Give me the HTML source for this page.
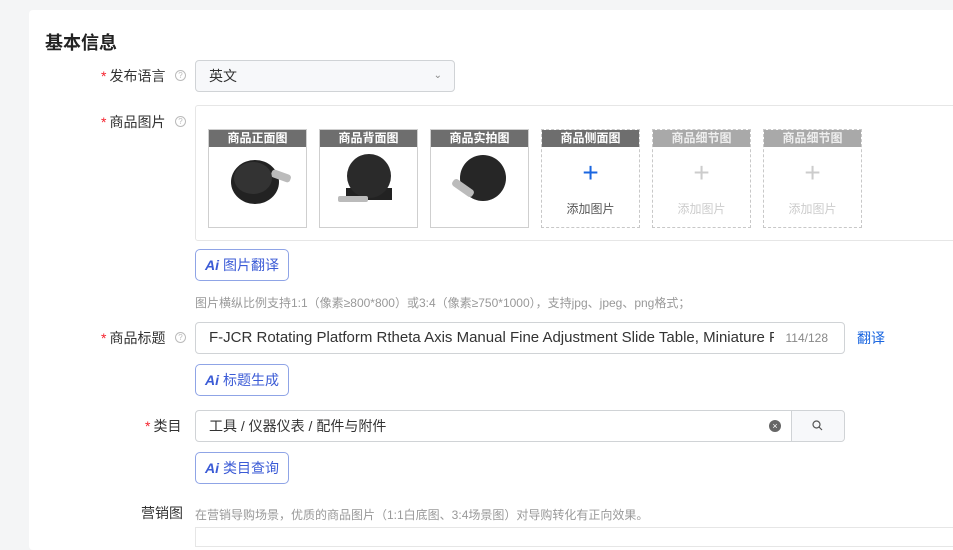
<!DOCTYPE html>
<html><head><meta charset="utf-8"><style>
*{box-sizing:border-box;margin:0;padding:0}
body{width:953px;height:536px;overflow:hidden;background:#f4f5f6;font-family:"Liberation Sans","Noto Sans CJK SC",sans-serif;color:#333;position:relative}
.card{position:absolute;left:29px;top:10px;width:930px;height:540px;background:#fff;border-radius:4px}
.abs{position:absolute}
.lbl{position:absolute;font-size:14px;color:#333;text-align:right;white-space:nowrap}
.lbl .s{color:#f5222d;margin-right:3px}
.q{position:absolute;width:11px;height:11px;border:1px solid #bbb;border-radius:50%;font-size:8px;color:#bbb;text-align:center;line-height:9px}
.inp{position:absolute;border:1px solid #d0d3d6;border-radius:4px;background:#fff;font-size:14px;color:#333}
.th{position:absolute;top:129px;width:99px;height:99px;border:1px solid #cfcfcf;background:#fff}
.th .h{height:17px;background:#6e6e6e;color:#fff;font-size:12px;font-weight:bold;text-align:center;line-height:17px}
.th.d{border:1px dashed #c8c8c8}
.th.g .h{background:#a9a9a9;color:#eee}
.plus{font-size:28px;text-align:center;line-height:30px;margin-top:11px;color:#1a66e0;font-weight:300}
.g .plus{color:#ccc}
.at{font-size:12px;text-align:center;margin-top:12px;color:#555}
.g .at{color:#ccc}
.ai{position:absolute;left:195px;width:94px;height:32px;border:1px solid #8fa4e6;border-radius:5px;font-size:14px;color:#3b5bd6;line-height:30px;padding-left:9px}
.ai b{font-style:italic;font-weight:bold;margin-right:4px}
.hint{position:absolute;font-size:12px;color:#999;white-space:nowrap}
.prod{position:absolute;left:12px;top:22px;width:72px;height:58px}
</style></head><body>
<div class="card"></div>
<div class="abs" style="left:45px;top:29px;font-size:18px;font-weight:bold;color:#222">基本信息</div>

<div class="lbl" style="left:101px;top:66px"><span class="s">*</span>发布语言</div>
<div class="q" style="left:175px;top:70px">?</div>
<div class="inp" style="left:195px;top:60px;width:260px;height:32px;background:#f7f8fa;line-height:30px;padding-left:13px">英文<span style="position:absolute;right:12px;top:0;font-size:10px;color:#888">&#8964;</span></div>

<div class="lbl" style="left:101px;top:112px"><span class="s">*</span>商品图片</div>
<div class="q" style="left:175px;top:116px">?</div>
<div class="abs" style="left:195px;top:105px;width:770px;height:136px;border:1px solid #e6e6e6;border-radius:3px"></div>

<div class="th" style="left:208px"><div class="h">商品正面图</div><svg class="prod" viewBox="0 0 72 58"><ellipse cx="34" cy="30" rx="24" ry="22" fill="#222"/><rect x="50" y="20" width="20" height="8" rx="3" fill="#bbb" transform="rotate(20 60 24)"/><ellipse cx="32" cy="26" rx="19" ry="16" fill="#333"/></svg></div>
<div class="th" style="left:319px"><div class="h">商品背面图</div><svg class="prod" viewBox="0 0 72 58"><rect x="14" y="36" width="46" height="12" fill="#222"/><circle cx="37" cy="24" r="22" fill="#2a2a2a"/><rect x="6" y="44" width="30" height="6" rx="2" fill="#bbb"/></svg></div>
<div class="th" style="left:430px"><div class="h">商品实拍图</div><svg class="prod" viewBox="0 0 72 58"><circle cx="40" cy="26" r="23" fill="#262626"/><rect x="8" y="32" width="24" height="8" rx="3" fill="#bbb" transform="rotate(35 20 36)"/></svg></div>
<div class="th d" style="left:541px"><div class="h">商品侧面图</div><div class="plus">+</div><div class="at">添加图片</div></div>
<div class="th d g" style="left:652px"><div class="h">商品细节图</div><div class="plus">+</div><div class="at">添加图片</div></div>
<div class="th d g" style="left:763px"><div class="h">商品细节图</div><div class="plus">+</div><div class="at">添加图片</div></div>

<div class="ai" style="top:249px"><b>Ai</b>图片翻译</div>
<div class="hint" style="left:195px;top:294px">图片横纵比例支持1:1（像素≥800*800）或3:4（像素≥750*1000），支持jpg、jpeg、png格式；</div>

<div class="lbl" style="left:101px;top:328px"><span class="s">*</span>商品标题</div>
<div class="q" style="left:175px;top:332px">?</div>
<div class="inp" style="left:195px;top:322px;width:650px;height:32px;line-height:30px;padding-left:13px;overflow:hidden;white-space:nowrap;font-size:15px"><span style="display:inline-block;width:565px;overflow:hidden;vertical-align:top">F-JCR Rotating Platform Rtheta Axis Manual Fine Adjustment Slide Table, Miniature Platform</span><span style="position:absolute;right:16px;font-size:12px;color:#888">114/128</span></div>
<div class="abs" style="left:857px;top:328px;font-size:14px;color:#1a66e0">翻译</div>
<div class="ai" style="top:364px"><b>Ai</b>标题生成</div>

<div class="lbl" style="left:145px;top:416px"><span class="s">*</span>类目</div>
<div class="inp" style="left:195px;top:410px;width:650px;height:32px;line-height:30px;padding-left:13px">工具 / 仪器仪表 / 配件与附件
<span style="position:absolute;left:573px;top:9px;width:12px;height:12px;border-radius:50%;background:#666;color:#fff;font-size:9px;line-height:12px;text-align:center">×</span>
<span style="position:absolute;left:595px;top:0;width:53px;height:30px;border-left:1px solid #d0d3d6;background:#f7f8fa;border-radius:0 4px 4px 0"><svg style="position:absolute;left:20px;top:9px" width="11" height="11" viewBox="0 0 11 11"><circle cx="4.5" cy="4.5" r="3.5" fill="none" stroke="#555" stroke-width="1.2"/><path d="M7 7l3 3" stroke="#555" stroke-width="1.2"/></svg></span></div>
<div class="ai" style="top:452px"><b>Ai</b>类目查询</div>

<div class="lbl" style="left:141px;top:503px">营销图</div>
<div class="hint" style="left:195px;top:506px">在营销导购场景，优质的商品图片（1:1白底图、3:4场景图）对导购转化有正向效果。</div>
<div class="abs" style="left:195px;top:527px;width:770px;height:20px;border:1px solid #e6e6e6"></div>
</body></html>
